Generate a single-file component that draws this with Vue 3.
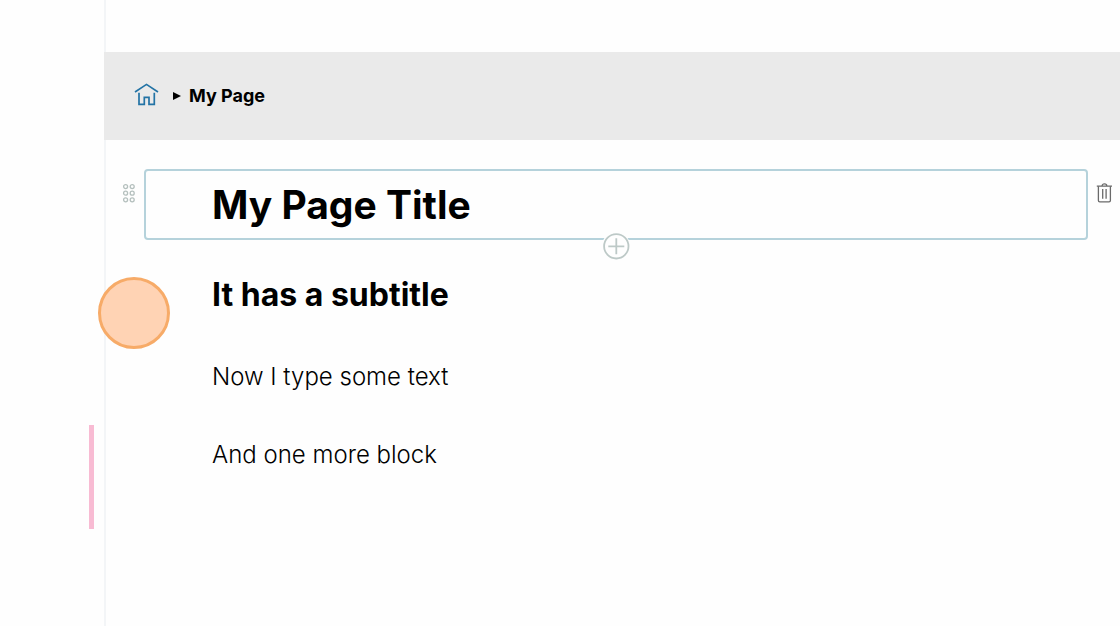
<script setup>
import { ref } from 'vue'

const paragraphs = ref(['Now I type some text', 'And one more block'])
const dots = [3.6, 10.2, 16.8].flatMap((y) => [3.6, 10.2].map((x) => ({ x, y })))
</script>

<template>
  <div class="app">
    <aside class="sidebar">
      <span class="marker"></span>
    </aside>
    <div class="workspace">
      <header class="topbar"></header>
      <nav class="breadcrumb" aria-label="Breadcrumb">
        <a href="#" class="home" aria-label="Home">
          <svg width="26" height="26" viewBox="0 0 26 26" fill="none" stroke="currentColor" stroke-width="1.7">
            <path d="M1 9 12.5 1.4 24 9" />
            <path d="M5 9.8V21.4H10.3V14.4H15V21.4H20.3V9.8" />
          </svg>
        </a>
        <svg class="arrow" width="8" height="8" viewBox="0 0 8 8"><path d="M0 0 8 4 0 8Z" fill="currentColor" /></svg>
        <span class="current">My Page</span>
      </nav>
      <main class="editor">
        <div class="row">
          <button class="tool drag" aria-label="Move block">
            <svg width="14" height="20" viewBox="0 0 14 20" fill="none" stroke="currentColor" stroke-width="1.3">
              <circle v-for="(d, i) in dots" :key="i" :cx="d.x" :cy="d.y" r="2" />
            </svg>
          </button>
          <section class="block selected">
            <h1>My Page Title</h1>
            <button class="add" aria-label="Add block">
              <svg width="28" height="28" viewBox="0 0 28 28" fill="none" stroke="currentColor" stroke-width="1.8">
                <circle cx="14.3" cy="14.3" r="12.2" />
                <path d="M14.3 6.3V22.3M6.3 14.3H22.3" />
              </svg>
            </button>
          </section>
          <button class="tool trash" aria-label="Delete block">
            <svg width="16" height="22" viewBox="0 0 16 22" fill="none" stroke="currentColor" stroke-width="1.3">
              <path d="M0.8 4.2H16M6 4C6 1.2 10.8 1.2 10.8 4" />
              <path d="M2.4 4.3V18.4Q2.4 19.8 3.8 19.8H13Q14.4 19.8 14.4 18.4V4.3M6.7 7V16.8M10.1 7V16.8" />
            </svg>
          </button>
        </div>
        <section class="block"><h2>It has a subtitle</h2></section>
        <section v-for="text in paragraphs" :key="text" class="block"><p>{{ text }}</p></section>
      </main>
    </div>
    <span class="pointer"></span>
  </div>
</template>

<style>
body {
  margin: 0;
  background: #fefefe;
}
</style>

<style scoped>
.app {
  position: relative;
  display: flex;
  min-height: 100vh;
  color: #000;
  font-family: Inter, "Liberation Sans", sans-serif;
}
.sidebar {
  position: relative;
  flex: 0 0 104px;
}
.marker {
  position: absolute;
  top: 425px;
  right: 10px;
  width: 5px;
  height: 104px;
  background: #f8bbd3;
}
.workspace {
  flex: 1;
  min-width: 0;
  box-shadow: inset 2px 0 #f3f5f7;
}
.topbar {
  height: 52px;
}
.breadcrumb {
  display: flex;
  align-items: center;
  height: 88px;
  padding-left: 30px;
  background: #eaeaea;
  font-size: 18px;
  line-height: 24px;
  font-weight: 700;
}
.home {
  display: flex;
  color: #2373a5;
}
.arrow {
  margin: 0 8px 0 13px;
}
button {
  display: flex;
  padding: 0;
  border: 0;
  background: none;
}
.editor {
  padding-top: 29px;
}
.row {
  display: grid;
  grid-template-columns: 40px minmax(0, 1fr) 32px;
  align-items: start;
}
.tool {
  justify-self: center;
  margin-top: 14px;
}
.drag {
  margin-left: 10px;
  color: #b5c0be;
}
.trash {
  margin-top: 13px;
  color: #6a6a6a;
}
.block {
  padding: 0 108px;
}
.selected {
  position: relative;
  padding: 10px 66px;
  border: 2px solid #b5d2db;
  border-radius: 4px;
}
.add {
  position: absolute;
  left: 50%;
  bottom: -22px;
  margin-left: -14px;
  border-radius: 50%;
  background: #fefefe;
  color: #bdc9c7;
}
h1,
h2,
p {
  margin: 0;
}
h1 {
  font-size: 39px;
  line-height: 47px;
  font-weight: 700;
}
h2 {
  padding: 35px 0 28px;
  font-size: 32px;
  line-height: 40px;
  font-weight: 700;
}
p {
  padding: 14px 0 24px;
  font-size: 24px;
  line-height: 40px;
  font-weight: 300;
}
.pointer {
  position: absolute;
  top: 277px;
  left: 98px;
  box-sizing: border-box;
  width: 72px;
  height: 72px;
  border: 3px solid #f7ab68;
  border-radius: 50%;
  background: #ffd3b4;
}
</style>
